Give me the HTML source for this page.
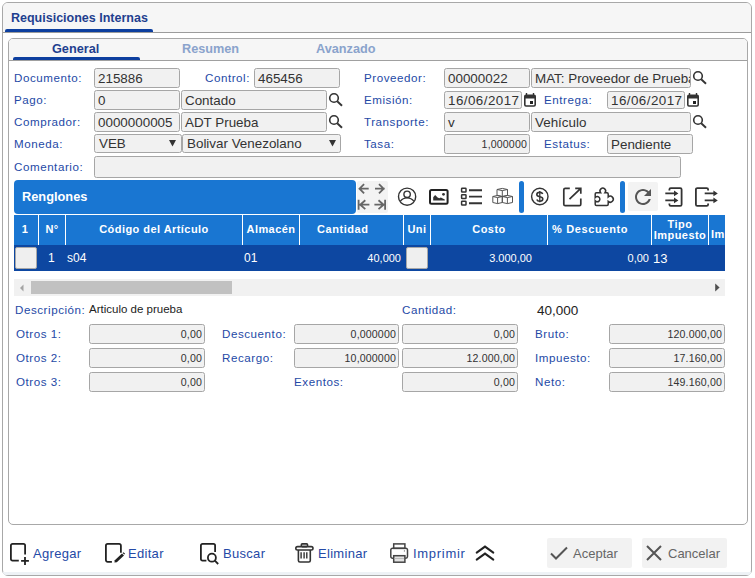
<!DOCTYPE html>
<html><head><meta charset="utf-8">
<style>
*{box-sizing:border-box;margin:0;padding:0}
html,body{width:755px;height:578px;overflow:hidden;background:#fff;font-family:"Liberation Sans",sans-serif}
.a{position:absolute}
svg{position:absolute;overflow:visible}
.outer{left:2px;top:2px;width:750px;height:574px;border:1px solid #a8a8a8;border-radius:6px;background:#fff}
.ostrip{left:3px;top:572px;width:748px;height:3px;background:#eef2f6;border-radius:0 0 5px 5px}
.ohead{left:3px;top:3px;width:748px;height:30px;background:#f6f6f6;border-bottom:1px solid #9c9c9c;border-radius:5px 5px 0 0}
.title{left:11px;top:11px;font-weight:bold;font-size:12.5px;color:#1f3f8f;white-space:nowrap}
.ouline{left:5px;top:29px;width:148px;height:3px;background:#0d3f9f;border-radius:2px 2px 0 0}
.inner{left:8px;top:38px;width:740px;height:487px;border:1px solid #a8a8a8;border-radius:5px;background:#fff}
.ihead{left:9px;top:39px;width:738px;height:22px;background:#f6f6f6;border-bottom:1px solid #a0a0a0;border-radius:4px 4px 0 0}
.tab{top:42px;font-weight:bold;font-size:12.7px;white-space:nowrap}
.iuline{left:13px;top:57px;width:127px;height:3px;background:#0d3f9f;border-radius:2px 2px 0 0}
.lbl{font-size:11.6px;letter-spacing:0.55px;color:#2449a6;white-space:nowrap;line-height:20px}
.inp{border:1px solid #a6a6a6;border-radius:2.5px;background:#f1f1f1;height:20px;font-size:13.4px;color:#333;line-height:19px;padding-left:3px;white-space:nowrap;overflow:hidden}
.num{text-align:right;padding-right:2px;padding-left:0;font-size:10.6px;letter-spacing:0.15px}
.th{top:214px;height:30px;line-height:30px;font-weight:bold;font-size:11px;letter-spacing:0.45px;color:#fff;text-align:center;white-space:nowrap}
.vd{top:215px;width:1px;height:30px;background:#fff}
.td{top:246px;height:25px;line-height:25px;color:#fff;white-space:nowrap}
.chk{width:22px;height:22px;background:#efefef;border:1px solid #a8a8a8;border-radius:2px}
.blbl{font-size:13px;letter-spacing:0.3px;color:#2449a6;white-space:nowrap;line-height:30px;top:539px}
.btn{top:538px;height:30px;background:#f2f2f2;border-radius:2px}
.btxt{font-size:13px;color:#666;white-space:nowrap;line-height:30px;top:539px}
</style></head><body>
<div class="a outer"></div>
<div class="a ostrip"></div>
<div class="a ohead"></div>
<div class="a title">Requisiciones Internas</div>
<div class="a ouline"></div>
<div class="a inner"></div>
<div class="a ihead"></div>
<div class="a tab" style="left:52px;color:#1f3f8f">General</div>
<div class="a tab" style="left:182px;color:#8aa3cc">Resumen</div>
<div class="a tab" style="left:316px;color:#8aa3cc">Avanzado</div>
<div class="a iuline"></div>

<!-- form rows -->
<div class="a lbl" style="left:14px;top:68px">Documento:</div>
<div class="a inp" style="left:94px;top:68px;width:86px">215886</div>
<div class="a lbl" style="left:205px;top:68px">Control:</div>
<div class="a inp" style="left:254px;top:68px;width:86px">465456</div>
<div class="a lbl" style="left:364px;top:68px">Proveedor:</div>
<div class="a inp" style="left:444px;top:68px;width:86px">00000022</div>
<div class="a inp" style="left:531px;top:68px;width:160px">MAT: Proveedor de Prueba</div>
<svg style="left:692px;top:70px" width="16" height="16" viewBox="0 0 16 16"><circle cx="6" cy="6" r="4.3" fill="none" stroke="#333" stroke-width="1.6"/><path d="M9.2 9.2L14 13.8" stroke="#333" stroke-width="1.9"/></svg>

<div class="a lbl" style="left:14px;top:90px">Pago:</div>
<div class="a inp" style="left:94px;top:90px;width:86px">0</div>
<div class="a inp" style="left:181px;top:90px;width:146px">Contado</div>
<svg style="left:328px;top:92px" width="16" height="16" viewBox="0 0 16 16"><circle cx="6" cy="6" r="4.3" fill="none" stroke="#333" stroke-width="1.6"/><path d="M9.2 9.2L14 13.8" stroke="#333" stroke-width="1.9"/></svg>
<div class="a lbl" style="left:364px;top:90px">Emisión:</div>
<div class="a inp" style="left:444px;top:91px;width:78px;height:18px;line-height:17px;letter-spacing:0.45px">16/06/2017</div>
<svg style="left:524px;top:93px" width="12" height="14" viewBox="0 0 12 14"><path d="M2.5 0v3M9.5 0v3" stroke="#333" stroke-width="1.4"/><rect x="0.8" y="2.2" width="10.4" height="10.8" rx="1.2" fill="none" stroke="#333" stroke-width="1.6"/><rect x="0.8" y="2.2" width="10.4" height="3.3" fill="#333"/><rect x="6" y="8" width="3" height="3" fill="#222"/></svg>
<div class="a lbl" style="left:544px;top:90px">Entrega:</div>
<div class="a inp" style="left:607px;top:91px;width:78px;height:18px;line-height:17px;letter-spacing:0.45px">16/06/2017</div>
<svg style="left:687px;top:93px" width="12" height="14" viewBox="0 0 12 14"><path d="M2.5 0v3M9.5 0v3" stroke="#333" stroke-width="1.4"/><rect x="0.8" y="2.2" width="10.4" height="10.8" rx="1.2" fill="none" stroke="#333" stroke-width="1.6"/><rect x="0.8" y="2.2" width="10.4" height="3.3" fill="#333"/><rect x="6" y="8" width="3" height="3" fill="#222"/></svg>

<div class="a lbl" style="left:14px;top:112px">Comprador:</div>
<div class="a inp" style="left:94px;top:112px;width:86px">0000000005</div>
<div class="a inp" style="left:181px;top:112px;width:146px">ADT Prueba</div>
<svg style="left:328px;top:114px" width="16" height="16" viewBox="0 0 16 16"><circle cx="6" cy="6" r="4.3" fill="none" stroke="#333" stroke-width="1.6"/><path d="M9.2 9.2L14 13.8" stroke="#333" stroke-width="1.9"/></svg>
<div class="a lbl" style="left:364px;top:112px">Transporte:</div>
<div class="a inp" style="left:444px;top:112px;width:86px">v</div>
<div class="a inp" style="left:531px;top:112px;width:160px">Vehículo</div>
<svg style="left:692px;top:114px" width="16" height="16" viewBox="0 0 16 16"><circle cx="6" cy="6" r="4.3" fill="none" stroke="#333" stroke-width="1.6"/><path d="M9.2 9.2L14 13.8" stroke="#333" stroke-width="1.9"/></svg>

<div class="a lbl" style="left:14px;top:134px">Moneda:</div>
<div class="a inp" style="left:94px;top:134px;width:88px;padding-left:4px;height:19px;line-height:18px">VEB</div>
<svg style="left:168px;top:139px" width="9" height="8" viewBox="0 0 9 8"><path d="M1 1h7l-3.5 6.5z" fill="#333"/></svg>
<div class="a inp" style="left:182px;top:134px;width:159px;padding-left:4px;height:19px;line-height:18px">Bolivar Venezolano</div>
<svg style="left:328px;top:139px" width="9" height="8" viewBox="0 0 9 8"><path d="M1 1h7l-3.5 6.5z" fill="#333"/></svg>
<div class="a lbl" style="left:364px;top:134px">Tasa:</div>
<div class="a inp num" style="left:444px;top:134px;width:86px">1,000000</div>
<div class="a lbl" style="left:544px;top:134px">Estatus:</div>
<div class="a inp" style="left:607px;top:134px;width:86px">Pendiente</div>

<div class="a lbl" style="left:14px;top:157px">Comentario:</div>
<div class="a inp" style="left:94px;top:156px;width:587px;height:22px"></div>

<!-- Renglones -->
<div class="a" style="left:14px;top:180px;width:342px;height:34px;background:#1976d2;border-radius:4px"></div>
<div class="a" style="left:22px;top:189px;font-weight:bold;font-size:12.8px;color:#fff">Renglones</div>

<!-- toolbar -->
<div class="a" style="left:357px;top:181px;width:31px;height:32px;background:#f3f3f3;border-radius:2px"></div>
<svg style="left:357px;top:181px" width="31" height="32" viewBox="0 0 31 32" fill="none" stroke="#666" stroke-width="1.8">
<path d="M2 7.7h9.7M7.1 3.1L2.5 7.7l4.6 4.6"/><path d="M18 7.7h9.7M22 3.1l4.6 4.6-4.6 4.6"/>
<path d="M1.6 18.7v10M2.6 23.7h9.8M8.3 19.3L3.2 23.7l5.1 4.4"/><path d="M28.1 18.7v10M17.4 23.7h10M21.5 19.3l5.1 4.4-5.1 4.4"/>
</svg>
<svg style="left:397px;top:187px" width="21" height="20" viewBox="0 0 21 20" fill="none" stroke="#333" stroke-width="1.4">
<circle cx="10.1" cy="9.7" r="8.6"/><circle cx="10.1" cy="7.3" r="3.2"/><path d="M3.4 14.2C5 12 7.4 10.9 10.1 10.9S15.2 12 16.8 14.2"/>
</svg>
<svg style="left:429px;top:189px" width="20" height="16" viewBox="0 0 20 16">
<rect x="1" y="1" width="17.6" height="13.8" rx="1.5" fill="none" stroke="#222" stroke-width="2"/><path d="M4.2 11.6V8.3L6.1 6l2.5 2.4 1.7.8 1.5-.8 4 2.1v1.1z" fill="#333"/><circle cx="14.5" cy="5.3" r="1.4" fill="#333"/>
</svg>
<svg style="left:460px;top:187px" width="23" height="19" viewBox="0 0 23 19" fill="none" stroke="#333">
<rect x="1.6" y="1.2" width="4.4" height="3.8" rx="0.6" stroke-width="1.5"/><rect x="1.6" y="7.7" width="4.4" height="3.8" rx="0.6" stroke-width="1.5"/><rect x="1.6" y="14.2" width="4.4" height="3.8" rx="0.6" stroke-width="1.5"/>
<path d="M9 3.2h13M9 9.6h13M9 16.2h13" stroke-width="1.9"/>
</svg>
<svg style="left:492px;top:188px" width="21" height="16" viewBox="0 0 21 16" fill="none" stroke="#555" stroke-width="1">
<path d="M5 1.5L10.3 0.4 15.5 1.5V7.5L10.3 8.6 5 7.5z M5 1.5L10.3 2.6 15.5 1.5 M10.3 2.6V8.6"/>
<path d="M0.8 8.5L5.6 7.4 10.3 8.5V14.5L5.6 15.6 0.8 14.5z M0.8 8.5L5.6 9.6 10.3 8.5 M5.6 9.6V15.6"/>
<path d="M10.3 8.5L15.4 7.4 20.5 8.5V14.5L15.4 15.6 10.3 14.5z M10.3 8.5L15.4 9.6 20.5 8.5 M15.4 9.6V15.6"/>
</svg>
<div class="a" style="left:519px;top:181px;width:5px;height:32px;background:#1976d2;border-radius:2.5px"></div>
<svg style="left:530px;top:187px" width="20" height="20" viewBox="0 0 20 20" fill="none" stroke="#333" stroke-width="1.4">
<circle cx="9.8" cy="9.5" r="8.2"/><path d="M12.7 7.1c-.4-1.1-1.5-1.7-2.9-1.7-1.8 0-3 .9-3 2.2 0 1.4 1.3 1.9 3 2.2 1.7.3 3 .9 3 2.3 0 1.3-1.3 2.2-3 2.2-1.5 0-2.6-.6-3-1.7" stroke-width="1.6"/><path d="M9.8 4v11.3" stroke-width="1.3"/>
</svg>
<svg style="left:563px;top:187px" width="19" height="20" viewBox="0 0 19 20" fill="none" stroke="#333" stroke-width="1.7">
<path d="M6.8 1.4H2.2A1.4 1.4 0 0 0 .8 2.8v14.4a1.4 1.4 0 0 0 1.4 1.4h14.2a1.4 1.4 0 0 0 1.4-1.4V11.5"/><path d="M12.2 1.4h5.6v5.4M17.5 1.7L6.5 12.2"/>
</svg>
<svg style="left:594px;top:187px" width="21" height="20" viewBox="0 0 21 20" fill="none" stroke="#333" stroke-width="1.5">
<path d="M1.2 6.9a1.2 1.2 0 0 1 1.2-1.2H6.6a2.8 2.8 0 1 1 4.4 0H13a1.2 1.2 0 0 1 1.2 1.2V10a3 3 0 1 1 0 4.4v2.9a1.2 1.2 0 0 1-1.2 1.2H2.4a1.2 1.2 0 0 1-1.2-1.2v-3.5a2.6 2.6 0 1 0 0-3.2z"/>
</svg>
<div class="a" style="left:620px;top:181px;width:5px;height:32px;background:#1976d2;border-radius:2.5px"></div>
<div class="a" style="left:628px;top:182px;width:30px;height:29px;background:#f3f3f3;border-radius:2px"></div>
<svg style="left:631px;top:185px" width="24" height="24" viewBox="0 0 24 24">
<path fill="#555" d="M17.65 6.35C16.2 4.9 14.21 4 12 4c-4.42 0-7.99 3.58-7.99 8s3.57 8 7.99 8c3.73 0 6.84-2.55 7.73-6h-2.08c-.82 2.33-3.04 4-5.65 4-3.31 0-6-2.69-6-6s2.69-6 6-6c1.66 0 3.14.69 4.22 1.78L13 11h7V4l-2.35 2.35z"/>
</svg>
<svg style="left:665px;top:187px" width="18" height="20" viewBox="0 0 18 20" fill="none" stroke="#333" stroke-width="1.8">
<path d="M4.4 3.6V2.5A1.4 1.4 0 0 1 5.8 1.1h9.4a1.4 1.4 0 0 1 1.4 1.4v15a1.4 1.4 0 0 1-1.4 1.4H5.8a1.4 1.4 0 0 1-1.4-1.4v-1.1"/>
<path d="M.3 6.4h9.5M.3 13.4h9.5"/><path d="M9 3.6l4.4 2.8L9 9.2zM9 10.6l4.4 2.8L9 16.2z" fill="#333" stroke="none"/>
</svg>
<svg style="left:695px;top:187px" width="24" height="20" viewBox="0 0 24 20" fill="none" stroke="#333" stroke-width="1.8">
<path d="M13.1 3.6V2.5a1.4 1.4 0 0 0-1.4-1.4H2.3A1.4 1.4 0 0 0 .9 2.5v15a1.4 1.4 0 0 0 1.4 1.4h9.4a1.4 1.4 0 0 0 1.4-1.4v-1.1"/>
<path d="M9.7 6.4h9.5M9.7 13.4h9.5"/><path d="M18.4 3.6l4.4 2.8-4.4 2.8zM18.4 10.6l4.4 2.8-4.4 2.8z" fill="#333" stroke="none"/>
</svg>

<!-- table -->
<div class="a" style="left:14px;top:215px;width:711px;height:30px;background:#1976d2"></div>
<div class="a" style="left:14px;top:245px;width:711px;height:26px;background:#0d47a1"></div>
<div class="a vd" style="left:38px"></div>
<div class="a vd" style="left:65px"></div>
<div class="a vd" style="left:242px"></div>
<div class="a vd" style="left:299px"></div>
<div class="a vd" style="left:403px"></div>
<div class="a vd" style="left:430px"></div>
<div class="a vd" style="left:547px"></div>
<div class="a vd" style="left:651px"></div>
<div class="a vd" style="left:708px"></div>
<div class="a th" style="left:13px;width:24px">1</div>
<div class="a th" style="left:39px;width:26px">N°</div>
<div class="a th" style="left:66px;width:176px">Código del Artículo</div>
<div class="a th" style="left:243px;width:56px">Almacén</div>
<div class="a th" style="left:317px;width:103px;text-align:left;letter-spacing:0.55px">Cantidad</div>
<div class="a th" style="left:404px;width:26px">Uni</div>
<div class="a th" style="left:431px;width:116px">Costo</div>
<div class="a th" style="left:552px;width:103px;text-align:left;letter-spacing:0.65px">% Descuento</div>
<div class="a th" style="left:652px;width:56px;line-height:11px;padding-top:5px;overflow:hidden">Tipo<br>Impuesto</div>
<div class="a th" style="left:711px;width:14px;text-align:left;overflow:hidden;line-height:11px;padding-top:15px">Im</div>
<div class="a chk" style="left:15px;top:247px"></div>
<div class="a td" style="left:48px;font-size:12px">1</div>
<div class="a td" style="left:67px;font-size:12px">s04</div>
<div class="a td" style="left:244px;font-size:12px">01</div>
<div class="a td" style="left:300px;width:101px;text-align:right;font-size:11px">40,000</div>
<div class="a chk" style="left:406px;top:247px"></div>
<div class="a td" style="left:431px;width:101px;text-align:right;font-size:11px">3.000,00</div>
<div class="a td" style="left:548px;width:101px;text-align:right;font-size:11px">0,00</div>
<div class="a td" style="left:653px;font-size:13px">13</div>

<!-- scrollbar -->
<div class="a" style="left:14px;top:279px;width:711px;height:17px;background:#f1f1f1"></div>
<div class="a" style="left:31px;top:281px;width:201px;height:13px;background:#c1c1c1"></div>
<svg style="left:19px;top:284px" width="6" height="8" viewBox="0 0 6 8"><path d="M4.5 0.5v7L1 4z" fill="#a3a3a3"/></svg>
<svg style="left:715px;top:283px" width="6" height="9" viewBox="0 0 6 9"><path d="M0.2 0.6v7.8L4.6 4.5z" fill="#505050"/></svg>

<!-- bottom -->
<div class="a lbl" style="left:15px;top:300px">Descripción:</div>
<div class="a" style="left:89px;top:303px;font-size:11.5px;color:#222">Articulo de prueba</div>
<div class="a lbl" style="left:402px;top:300px">Cantidad:</div>
<div class="a" style="left:537px;top:303px;font-size:13.5px;color:#222">40,000</div>

<div class="a lbl" style="left:16px;top:324px">Otros 1:</div>
<div class="a inp num" style="left:89px;top:324px;width:116px">0,00</div>
<div class="a lbl" style="left:222px;top:324px">Descuento:</div>
<div class="a inp num" style="left:294px;top:324px;width:105px">0,000000</div>
<div class="a inp num" style="left:402px;top:324px;width:116px">0,00</div>
<div class="a lbl" style="left:535px;top:324px">Bruto:</div>
<div class="a inp num" style="left:609px;top:324px;width:116px">120.000,00</div>

<div class="a lbl" style="left:16px;top:348px">Otros 2:</div>
<div class="a inp num" style="left:89px;top:348px;width:116px">0,00</div>
<div class="a lbl" style="left:222px;top:348px">Recargo:</div>
<div class="a inp num" style="left:294px;top:348px;width:105px">10,000000</div>
<div class="a inp num" style="left:402px;top:348px;width:116px">12.000,00</div>
<div class="a lbl" style="left:535px;top:348px">Impuesto:</div>
<div class="a inp num" style="left:609px;top:348px;width:116px">17.160,00</div>

<div class="a lbl" style="left:16px;top:372px">Otros 3:</div>
<div class="a inp num" style="left:89px;top:372px;width:116px">0,00</div>
<div class="a lbl" style="left:294px;top:372px">Exentos:</div>
<div class="a inp num" style="left:402px;top:372px;width:116px">0,00</div>
<div class="a lbl" style="left:535px;top:372px">Neto:</div>
<div class="a inp num" style="left:609px;top:372px;width:116px">149.160,00</div>

<!-- bottom buttons -->
<svg style="left:10px;top:543px" width="20" height="23" viewBox="0 0 20 23" fill="none" stroke="#222" stroke-width="1.8">
<path d="M8.8 17.7H2.5A1.6 1.6 0 0 1 .9 16.1V2.5A1.6 1.6 0 0 1 2.5.9h11a1.6 1.6 0 0 1 1.6 1.6v9"/><path d="M11.1 17.9h7.8M15 14v8"/>
</svg>
<div class="a blbl" style="left:33px">Agregar</div>
<svg style="left:105px;top:543px" width="20" height="21" viewBox="0 0 20 21" fill="none" stroke="#222" stroke-width="1.8">
<path d="M6.9 18.8H2.7A1.8 1.8 0 0 1 .9 17V2.7A1.8 1.8 0 0 1 2.7.9h11.4a1.8 1.8 0 0 1 1.8 1.8v7"/>
<path d="M9.4 19.6l.4-2.4 7.2-6.6 2 2-7.2 6.6z" fill="#222" stroke="none"/><path d="M17.6 10l.9-.8 1.6 1.6-.9.8z" fill="#222" stroke="none"/>
</svg>
<div class="a blbl" style="left:128px">Editar</div>
<svg style="left:200px;top:543px" width="20" height="23" viewBox="0 0 20 23" fill="none" stroke="#222" stroke-width="1.8">
<path d="M6.4 17.7H2.5A1.6 1.6 0 0 1 .9 16.1V2.5A1.6 1.6 0 0 1 2.5.9h11a1.6 1.6 0 0 1 1.6 1.6v6.4"/><circle cx="11.9" cy="14.7" r="4"/><path d="M14.8 17.6l3.4 3.4"/>
</svg>
<div class="a blbl" style="left:223px">Buscar</div>
<svg style="left:295px;top:543px" width="19" height="20" viewBox="0 0 19 20" fill="none" stroke="#333" stroke-width="1.6">
<rect x="6.3" y=".9" width="6.3" height="2.7" rx="1"/><rect x=".8" y="3.6" width="17.2" height="3.4" rx="1.7"/><path d="M3.4 7v10.5a1.5 1.5 0 0 0 1.5 1.5h8.9a1.5 1.5 0 0 0 1.5-1.5V7"/><path d="M6.1 9.3v6.2M9.1 9.3v6.2M11.8 9.3v6.2" stroke-width="1.4"/>
</svg>
<div class="a blbl" style="left:318px">Eliminar</div>
<svg style="left:390px;top:543px" width="19" height="20" viewBox="0 0 19 20" fill="none" stroke="#444" stroke-width="1.5">
<rect x="3.7" y=".9" width="11.2" height="4.5"/><path d="M3.2 15.3H2.5A1.7 1.7 0 0 1 .8 13.6V7a1.7 1.7 0 0 1 1.7-1.7h13.3A1.7 1.7 0 0 1 17.5 7v6.6a1.7 1.7 0 0 1-1.7 1.7h-.6"/><rect x="3.7" y="12.7" width="11.2" height="6.5" fill="#e2e2e2"/><path d="M4.5 15.5h9.6" stroke="#bbb" stroke-width="1"/><circle cx="14.4" cy="7.9" r=".6" fill="#666" stroke="none"/>
</svg>
<div class="a blbl" style="left:413px;letter-spacing:0.7px">Imprimir</div>
<svg style="left:475px;top:545px" width="20" height="16" viewBox="0 0 20 16" fill="none" stroke="#222" stroke-width="2" stroke-linecap="round">
<path d="M1.7 7.6L10 1.6l8.3 6"/><path d="M1.7 14.6L10 8.6l8.3 6"/>
</svg>
<div class="a btn" style="left:547px;width:85px"></div>
<svg style="left:550px;top:546px" width="18" height="14" viewBox="0 0 18 14" fill="none" stroke="#555" stroke-width="2">
<path d="M1 7.5l5 5L17 1.5"/>
</svg>
<div class="a btxt" style="left:573px">Aceptar</div>
<div class="a btn" style="left:642px;width:85px"></div>
<svg style="left:646px;top:545px" width="16" height="16" viewBox="0 0 16 16" fill="none" stroke="#555" stroke-width="2">
<path d="M1 1l14 14M15 1L1 15"/>
</svg>
<div class="a btxt" style="left:668px">Cancelar</div>
</body></html>
